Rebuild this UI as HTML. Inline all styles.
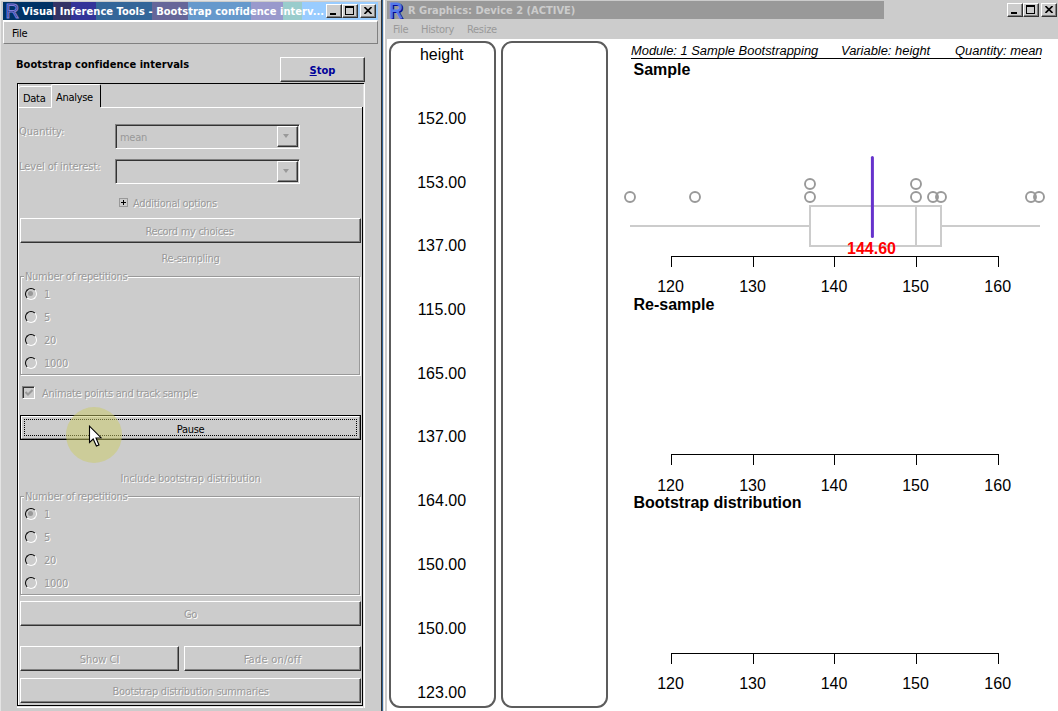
<!DOCTYPE html>
<html>
<head>
<meta charset="utf-8">
<title>Visual Inference Tools</title>
<style>
html,body{margin:0;padding:0;}
body{width:1058px;height:711px;overflow:hidden;background:#ccc;position:relative;
  font-family:"DejaVu Sans Condensed","Liberation Sans",sans-serif;font-size:11px;color:#000;}
.a{position:absolute;white-space:nowrap;}
.t{position:absolute;white-space:nowrap;line-height:14px;height:14px;letter-spacing:-0.3px;}
.dis{color:#999;text-shadow:1px 1px 0 #fff;}
.btn{position:absolute;box-sizing:border-box;background:#ccc;border:1px solid;border-color:#fff #333 #333 #fff;
  box-shadow:inset -1px -1px 0 #808080;text-align:center;line-height:26px;letter-spacing:-0.3px;}
.grp{position:absolute;box-sizing:border-box;border:1px solid #999;box-shadow:1px 1px 0 #fff, inset 1px 1px 0 #fff;}
.radio{position:absolute;width:12px;height:12px;box-sizing:border-box;border-radius:50%;background:#ccc;
  border:1.6px solid;border-color:#000 #fff #fff #000;}
.radio.on::after{content:"";position:absolute;left:1.9px;top:1.9px;width:5px;height:5px;border-radius:50%;background:#999;}
.combo{position:absolute;box-sizing:border-box;background:#ccc;border:1px solid;border-color:#808080 #fff #fff #808080;
  box-shadow:inset 1px 1px 0 #333;}
.cbtn{position:absolute;right:1px;top:1px;bottom:1px;width:21px;box-sizing:border-box;background:#ccc;border:1px solid;
  border-color:#fff #333 #333 #fff;box-shadow:inset -1px -1px 0 #808080;}
.cbtn::after{content:"";position:absolute;left:5px;top:7px;border-left:3.5px solid transparent;border-right:3.5px solid transparent;border-top:4px solid #999;}
.wb{position:absolute;box-sizing:border-box;width:16px;height:14px;background:#ccc;border:1px solid;border-color:#fff #333 #333 #fff;
  box-shadow:inset -1px -1px 0 #808080;}
.g{font-family:"Liberation Sans",sans-serif;}
</style>
</head>
<body>

<!-- ================= LEFT WINDOW ================= -->
<div class="a" style="left:0;top:0;width:1px;height:711px;background:#e4e4e4"></div>
<div class="a" style="left:0;top:0;width:381px;height:1px;background:#e4e4e4"></div>
<!-- title bar bands -->
<div class="a" id="ltitle" style="left:3px;top:2px;width:375px;height:18px;background:#99ccff">
  <div class="a" style="left:0;top:0;height:18px;width:50px;background:#003366"></div>
  <div class="a" style="left:50px;top:0;height:18px;width:18px;background:#333366"></div>
  <div class="a" style="left:68px;top:0;height:18px;width:25px;background:#333399"></div>
  <div class="a" style="left:93px;top:0;height:18px;width:56px;background:#336699"></div>
  <div class="a" style="left:149px;top:0;height:18px;width:36px;background:#666699"></div>
  <div class="a" style="left:185px;top:0;height:18px;width:63px;background:#6699cc"></div>
  <div class="a" style="left:248px;top:0;height:18px;width:32px;background:#9999cc"></div>
  <div class="a" style="left:280px;top:0;height:18px;width:19px;background:#99cccc"></div>
</div>
<svg class="a" style="left:4px;top:2px" width="18" height="18" viewBox="0 0 18 18" font-family="Liberation Sans, sans-serif" font-size="21">
  <g transform="translate(1.6,16.4) scale(0.9,1)">
    <text x="0" y="0" fill="#1a2a7a" stroke="#8080dd" stroke-width="1.1">R</text>
  </g>
</svg>
<div class="t" style="left:22px;top:5px;color:#fff;font-weight:bold;letter-spacing:0.05px">Visual Inference Tools - Bootstrap confidence interv...</div>
<div class="wb" style="left:326px;top:4px"><div class="a" style="left:3px;top:8px;width:6px;height:2px;background:#000"></div></div>
<div class="wb" style="left:342px;top:4px"><div class="a" style="left:2px;top:1px;width:9px;height:9px;box-sizing:border-box;border:1px solid #000;border-top-width:2px"></div></div>
<div class="wb" style="left:360px;top:4px">
  <svg class="a" style="left:3px;top:2px" width="8" height="7" viewBox="0 0 8 7"><path d="M0.5 0 L7.5 7 M7.5 0 L0.5 7" stroke="#000" stroke-width="1.6" fill="none"/></svg>
</div>
<!-- menu bar -->
<div class="a" style="left:3px;top:20px;width:375px;height:24px;box-sizing:border-box;border:1px solid;border-color:#fff #808080 #808080 #fff;border-top-width:2px"></div>
<div class="t" style="left:12px;top:27px">File</div>

<!-- heading + stop -->
<div class="t" style="left:16px;top:58px;font-weight:bold;letter-spacing:0.04px">Bootstrap confidence intervals</div>
<div class="btn" style="left:280px;top:57px;width:85px;height:25px;line-height:25px;color:#000099;font-weight:bold;letter-spacing:0"><span style="text-decoration:underline">S</span>top</div>

<!-- notebook frame -->
<div class="a" style="left:17px;top:83px;width:347px;height:1px;background:#000"></div>
<div class="a" style="left:17px;top:83px;width:1px;height:624px;background:#000"></div>
<div class="a" style="left:17px;top:706px;width:348px;height:2px;background:#fff;border-top:1px solid #e2e2e2;box-sizing:border-box"></div>
<div class="a" style="left:363px;top:84px;width:2px;height:624px;background:#fff;border-left:1px solid #e2e2e2;box-sizing:border-box"></div>
<div class="a" style="left:18px;top:84px;width:1px;height:622px;background:#fff"></div>
<div class="a" style="left:362px;top:107px;width:1px;height:599px;background:#000"></div>
<div class="a" style="left:18px;top:705px;width:345px;height:1px;background:#000"></div>
<!-- tabs -->
<div class="a" style="left:18px;top:86px;width:34px;height:22px;box-sizing:border-box;border:1px solid #fff;border-radius:3px 0 0 0"></div>
<div class="a" style="left:51px;top:84px;width:50px;height:23px;box-sizing:border-box;border:1px solid;border-color:#fff #000 transparent #fff;border-bottom:none;border-radius:2px 2px 0 0;background:#ccc"></div>
<div class="a" style="left:101px;top:107px;width:261px;height:1px;background:#fff"></div>
<div class="t" style="left:23px;top:92px">Data</div>
<div class="t" style="left:56px;top:91px">Analyse</div>

<!-- combos -->
<div class="t dis" style="left:19px;top:125px;letter-spacing:0">Quantity:</div>
<div class="combo" style="left:115px;top:124px;width:185px;height:25px"><div class="cbtn"></div></div>
<div class="t" style="left:120px;top:131px;color:#999">mean</div>
<div class="t dis" style="left:19px;top:160px;letter-spacing:-0.1px">Level of interest:</div>
<div class="combo" style="left:115px;top:159px;width:185px;height:25px"><div class="cbtn"></div></div>

<div class="a" style="left:119px;top:198px;width:9px;height:9px;box-sizing:border-box;border:1px solid #999;background:#ccc">
  <div class="a" style="left:1px;top:3px;width:5px;height:1px;background:#000"></div>
  <div class="a" style="left:3px;top:1px;width:1px;height:5px;background:#000"></div>
</div>
<div class="t dis" style="left:133px;top:197px">Additional options</div>

<div class="btn dis" style="left:20px;top:218px;width:341px;height:25px;padding-right:2px">Record my choices</div>
<div class="t dis" style="left:20px;top:252px;width:341px;text-align:center">Re-sampling</div>

<!-- group 1 -->
<div class="grp" style="left:20px;top:276px;width:340px;height:99px"></div>
<div class="t dis" style="left:24px;top:270px;background:#ccc;padding:0 1px">Number of repetitions</div>
<div class="radio on" style="left:25px;top:288px"></div><div class="t dis" style="left:44px;top:288px">1</div>
<div class="radio" style="left:25px;top:311px"></div><div class="t dis" style="left:44px;top:311px">5</div>
<div class="radio" style="left:25px;top:334px"></div><div class="t dis" style="left:44px;top:334px">20</div>
<div class="radio" style="left:25px;top:357px"></div><div class="t dis" style="left:44px;top:357px">1000</div>

<!-- checkbox -->
<div class="a" style="left:22px;top:386px;width:13px;height:13px;box-sizing:border-box;background:#ccc;border:1px solid;border-color:#808080 #fff #fff #808080;box-shadow:inset 1px 1px 0 #333">
  <svg class="a" style="left:2px;top:2px" width="8" height="8" viewBox="0 0 8 8"><path d="M0.5 3 L3 5.5 L7.5 1" stroke="#999" stroke-width="2" fill="none"/></svg>
</div>
<div class="t dis" style="left:42px;top:387px">Animate points and track sample</div>

<!-- pause -->
<div class="a" style="left:20px;top:415px;width:341px;height:25px;box-sizing:border-box;border:1px solid #000"></div>
<div class="btn" style="left:21px;top:416px;width:339px;height:23px;line-height:25px;border-color:#fff #808080 #808080 #fff;box-shadow:none">Pause</div>
<div class="a" style="left:24px;top:419px;width:333px;height:17px;box-sizing:border-box;border:1px dotted #000"></div>

<div class="t dis" style="left:20px;top:472px;width:341px;text-align:center;letter-spacing:-0.21px">Include bootstrap distribution</div>

<!-- group 2 -->
<div class="grp" style="left:20px;top:496px;width:340px;height:99px"></div>
<div class="t dis" style="left:24px;top:490px;background:#ccc;padding:0 1px">Number of repetitions</div>
<div class="radio on" style="left:25px;top:508px"></div><div class="t dis" style="left:44px;top:508px">1</div>
<div class="radio" style="left:25px;top:531px"></div><div class="t dis" style="left:44px;top:531px">5</div>
<div class="radio" style="left:25px;top:554px"></div><div class="t dis" style="left:44px;top:554px">20</div>
<div class="radio" style="left:25px;top:577px"></div><div class="t dis" style="left:44px;top:577px">1000</div>

<div class="btn dis" style="left:20px;top:601px;width:341px;height:25px">Go</div>
<div class="btn dis" style="left:20px;top:646px;width:159px;height:25px;letter-spacing:0">Show CI</div>
<div class="btn dis" style="left:184px;top:646px;width:177px;height:25px;letter-spacing:0.25px">Fade on/off</div>
<div class="btn dis" style="left:20px;top:678px;width:341px;height:25px">Bootstrap distribution summaries</div>

<!-- cursor highlight -->
<div class="a" style="left:66px;top:407px;width:56px;height:56px;border-radius:50%;background:rgba(204,204,102,0.5)"></div>
<svg class="a" style="left:88px;top:425px" width="15" height="23" viewBox="0 0 15 23">
  <path d="M1.5 1.2 L1.5 17.5 L5.2 14 L8.4 21 L11 20 L8 13 L13 12.7 Z" fill="#fff" stroke="#000" stroke-width="1.1" stroke-linejoin="miter"/>
</svg>

<!-- window edge -->
<div class="a" style="left:381px;top:0;width:1px;height:711px;background:#333"></div>
<div class="a" style="left:382px;top:0;width:1px;height:711px;background:#336699"></div>
<div class="a" style="left:383px;top:0;width:1px;height:711px;background:#ddd"></div>
<div class="a" style="left:384px;top:0;width:1px;height:711px;background:#fff"></div>

<!-- ================= RIGHT WINDOW ================= -->
<div class="a" style="left:387px;top:1px;width:497px;height:18px;background:#999"></div>
<svg class="a" style="left:388px;top:1px" width="18" height="18" viewBox="0 0 18 18" font-family="Liberation Sans, sans-serif" font-size="21.5">
  <g transform="translate(1.0,16.8) scale(0.88,1)">
    <text x="1.5" y="1" fill="#000099" stroke="#000099" stroke-width="0.9">R</text>
    <text x="0" y="0" fill="#4d73e6" stroke="#5a80ee" stroke-width="0.9">R</text>
  </g>
</svg>
<div class="t" style="left:408px;top:4px;color:#ccc;font-weight:bold;letter-spacing:0">R Graphics: Device 2 (ACTIVE)</div>
<div class="wb" style="left:1007px;top:3px"><div class="a" style="left:3px;top:8px;width:6px;height:2px;background:#000"></div></div>
<div class="wb" style="left:1023px;top:3px"><div class="a" style="left:2px;top:1px;width:9px;height:9px;box-sizing:border-box;border:1px solid #000;border-top-width:2px"></div></div>
<div class="wb" style="left:1041px;top:3px">
  <svg class="a" style="left:3px;top:2px" width="8" height="7" viewBox="0 0 8 7"><path d="M0.5 0 L7.5 7 M7.5 0 L0.5 7" stroke="#000" stroke-width="1.6" fill="none"/></svg>
</div>
<div class="t" style="left:393px;top:23px;color:#999">File</div>
<div class="t" style="left:421px;top:23px;color:#999">History</div>
<div class="t" style="left:467px;top:23px;color:#999">Resize</div>

<!-- plot area -->
<svg class="a g" style="left:387px;top:39px" width="671" height="672" viewBox="387 39 671 672" font-family="Liberation Sans, sans-serif">
  <rect x="387" y="39" width="671" height="672" fill="#fff"/>
  <rect x="390" y="42" width="105" height="665" rx="10" ry="10" fill="none" stroke="#5c5c5c" stroke-width="2"/>
  <rect x="502" y="42" width="105" height="665" rx="10" ry="10" fill="none" stroke="#5c5c5c" stroke-width="2"/>
  <g font-size="16" text-anchor="middle" fill="#000">
    <text x="441.7" y="60">height</text>
    <text x="441.7" y="124">152.00</text>
    <text x="441.7" y="188">153.00</text>
    <text x="441.7" y="251">137.00</text>
    <text x="441.7" y="315">115.00</text>
    <text x="441.7" y="379">165.00</text>
    <text x="441.7" y="442">137.00</text>
    <text x="441.7" y="506">164.00</text>
    <text x="441.7" y="570">150.00</text>
    <text x="441.7" y="634">150.00</text>
    <text x="441.7" y="697.5">123.00</text>
  </g>
  <g font-size="12.92" font-style="italic" fill="#000">
    <text x="631" y="54.6">Module: 1 Sample Bootstrapping</text>
    <text x="841" y="54.6">Variable: height</text>
    <text x="955" y="54.6">Quantity: mean</text>
  </g>
  <line x1="631" y1="58.5" x2="1041" y2="58.5" stroke="#000" stroke-width="1" shape-rendering="crispEdges"/>
  <g font-size="16" font-weight="bold" fill="#000">
    <text x="633.5" y="75">Sample</text>
    <text x="633.5" y="310">Re-sample</text>
    <text x="633.5" y="508">Bootstrap distribution</text>
  </g>
  <!-- boxplot -->
  <g stroke="#ccc" stroke-width="2" fill="none" shape-rendering="crispEdges">
    <line x1="630" y1="226" x2="810" y2="226"/>
    <rect x="810" y="206" width="131" height="40"/>
    <line x1="916" y1="206" x2="916" y2="246"/>
    <line x1="941" y1="226" x2="1040" y2="226"/>
  </g>
  <g stroke="#999" stroke-width="1.9" fill="none">
    <circle cx="630" cy="197" r="5"/>
    <circle cx="695" cy="197" r="5"/>
    <circle cx="810" cy="197" r="5"/>
    <circle cx="810" cy="184" r="5"/>
    <circle cx="916" cy="197" r="5"/>
    <circle cx="916" cy="184" r="5"/>
    <circle cx="933" cy="197" r="5"/>
    <circle cx="941" cy="197" r="5"/>
    <circle cx="1031" cy="197" r="5"/>
    <circle cx="1039" cy="197" r="5"/>
  </g>
  <line x1="872.4" y1="157.5" x2="872.4" y2="236.5" stroke="#6633cc" stroke-width="3" stroke-linecap="round"/>
  <text x="871.5" y="253.5" font-size="16" font-weight="bold" fill="#ff0000" text-anchor="middle">144.60</text>
  <!-- axes -->
  <g id="ax1" stroke="#000" stroke-width="1" fill="none" shape-rendering="crispEdges">
    <path d="M671.5 267 V256.5 H998.5 V267 M753.5 256.5 V267 M834.5 256.5 V267 M916.5 256.5 V267"/>
    <path d="M671.5 465 V454.5 H998.5 V465 M753.5 454.5 V465 M834.5 454.5 V465 M916.5 454.5 V465"/>
    <path d="M671.5 664 V653.5 H998.5 V664 M753.5 653.5 V664 M834.5 653.5 V664 M916.5 653.5 V664"/>
  </g>
  <g font-size="16" text-anchor="middle" fill="#000">
    <text x="670.5" y="292">120</text><text x="752.5" y="292">130</text><text x="834" y="292">140</text><text x="915.5" y="292">150</text><text x="997.7" y="292">160</text>
    <text x="670.5" y="491">120</text><text x="752.5" y="491">130</text><text x="834" y="491">140</text><text x="915.5" y="491">150</text><text x="997.7" y="491">160</text>
    <text x="670.5" y="689">120</text><text x="752.5" y="689">130</text><text x="834" y="689">140</text><text x="915.5" y="689">150</text><text x="997.7" y="689">160</text>
  </g>
</svg>

</body>
</html>
